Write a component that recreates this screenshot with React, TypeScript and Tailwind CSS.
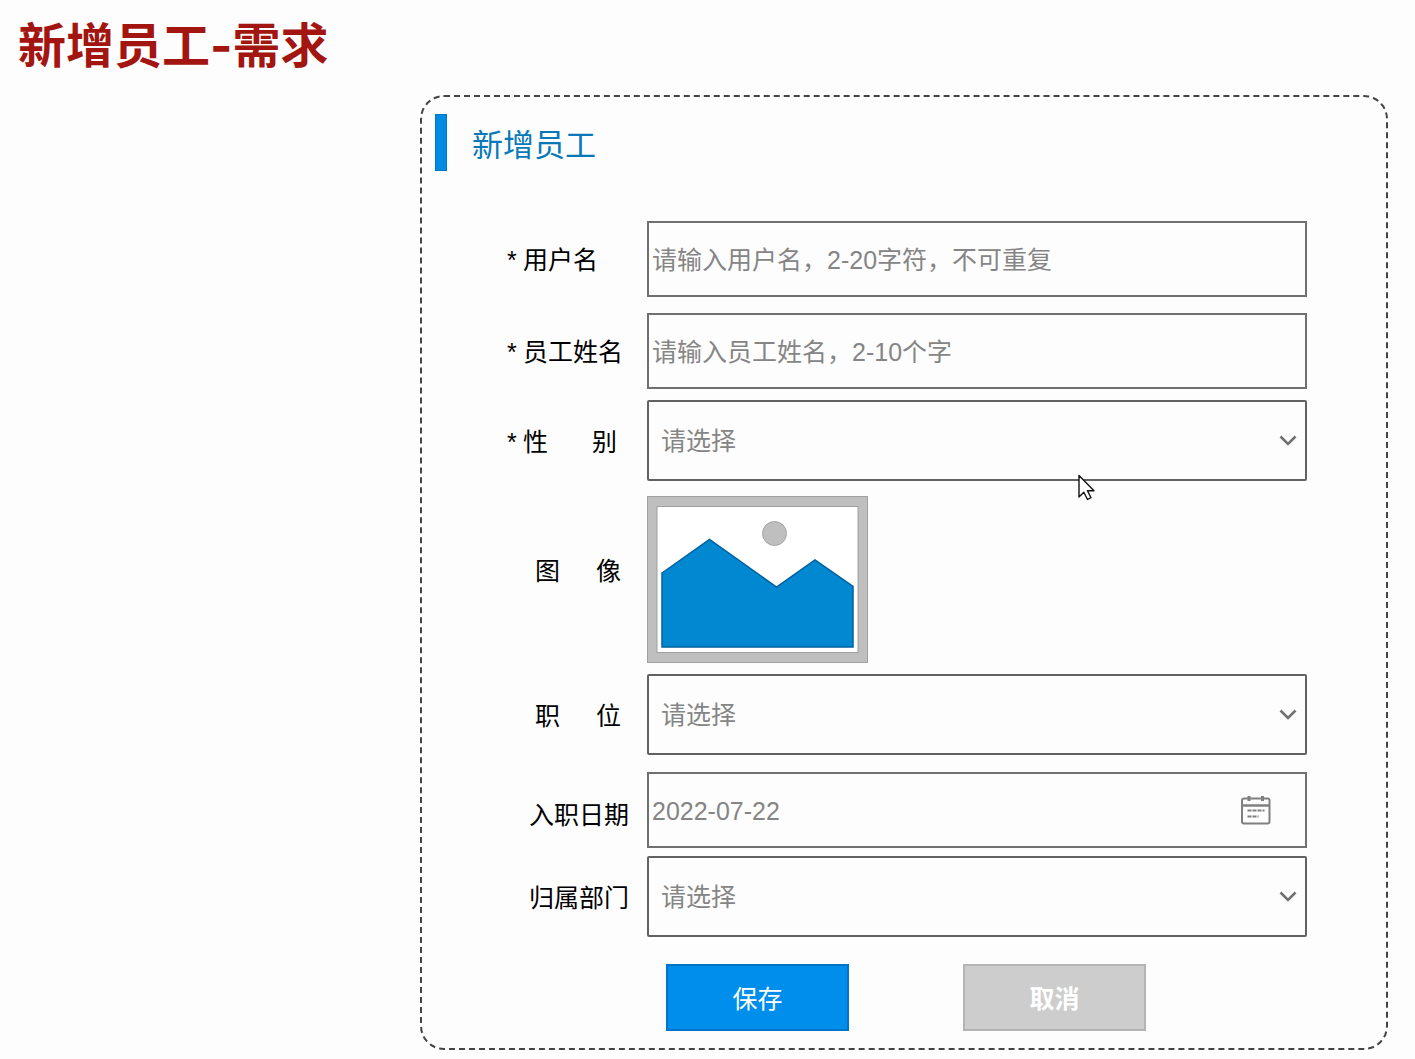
import { useState } from "react";

type Field = {
  id: string;
  label: string[];
  required?: boolean;
  rowClass?: string;
  labelClass: string;
};

const fields: Record<string, Field> = {
  username: { id: "username", label: ["用户名"], required: true, labelClass: "gap-2" },
  name: { id: "name", label: ["员工姓名"], required: true, labelClass: "gap-2", rowClass: "mt-4" },
  gender: { id: "gender", label: ["性", "别"], required: true, labelClass: "gap-11", rowClass: "mt-[11px]" },
  image: { id: "image", label: ["图", "像"], labelClass: "pl-7 pb-5 gap-9", rowClass: "mt-[15px]" },
  job: { id: "job", label: ["职", "位"], labelClass: "pl-7 gap-9", rowClass: "mt-[11px]" },
  entry: { id: "entry", label: ["入职日期"], labelClass: "pl-[22px] pt-2", rowClass: "mt-[17px]" },
  dept: { id: "dept", label: ["归属部门"], labelClass: "pl-[22px]", rowClass: "mt-2" },
};

function Row({ field, children }: { field: Field; children: React.ReactNode }) {
  return (
    <div className={`flex items-center ${field.rowClass || ""}`}>
      <label htmlFor={field.id} className="w-[140px] shrink-0 flex pt-0.5 text-[25px] leading-8 text-black">
        {field.required && <span className="w-4 shrink-0">*</span>}
        <span className={`flex ${field.labelClass}`}>
          {field.label.map(part => <span key={part}>{part}</span>)}
        </span>
      </label>
      <div className="relative flex-1 min-w-0">{children}</div>
    </div>
  );
}

function SelectBox({ id, options }: { id: string; options: string[] }) {
  return (
    <>
      <select id={id} defaultValue=""
        className="block w-full h-[81px] appearance-none rounded-xs border-2 border-[#626262] bg-transparent pl-3 pr-10 pt-[3px] text-[25px] text-[#858585] outline-none">
        <option value="">请选择</option>
        {options.map(o => <option key={o} value={o}>{o}</option>)}
      </select>
      <svg className="absolute right-[10px] top-[35px] pointer-events-none" width="18" height="12" viewBox="0 0 18 12" fill="none">
        <path d="M1.5 1.5 9 9l7.5-7.5" stroke="#707070" strokeWidth="2.5"/>
      </svg>
    </>
  );
}

function Pointer() {
  return (
    <svg className="absolute right-[212px] top-[74px] pointer-events-none" width="17" height="27" viewBox="0 0 17 27">
      <path d="M1 1.5v21.5l4.8-4.8 3.7 7.3 3.5-1.8-3.5-7H16z" fill="#fff" stroke="#111" strokeWidth="1.4" strokeLinejoin="round"/>
    </svg>
  );
}

export default function App() {
  const [username, setUsername] = useState("");
  const [name, setName] = useState("");
  const [date, setDate] = useState("2022-07-22");

  const inputClass = "block w-full h-[76px] border-2 border-[#707070] bg-transparent pl-[3px] pr-3 pt-0.5 text-[25px] text-[#858585] placeholder:text-[#858585] outline-none";

  return (
    <main className="min-h-screen bg-[#fdfdfd] pb-[9px] font-['Liberation_Sans','Noto_Sans_CJK_SC',sans-serif]">
      <h1 className="h-[95px] pl-[18px] pt-4 font-['Inter','Noto_Sans_CJK_SC',sans-serif] text-[48px] leading-[60px] font-bold text-[#a31510]">新增员工-需求</h1>

      <form onSubmit={e => e.preventDefault()}
        className="ml-[420px] mr-[27px] rounded-[24px] border-2 border-dashed border-[#444] pt-[17px] pb-[17px]">
        <div className="flex items-center ml-[13px]">
          <div className="w-3 h-[57px] bg-[#008be2] border border-[#0076c4]"/>
          <h2 className="ml-[25px] pt-1.5 text-[31px] leading-10 text-[#0878b9]">新增员工</h2>
        </div>

        <div className="mt-[50px] ml-[85px] mr-[79px]">
          <Row field={fields.username}>
            <input id="username" value={username} onChange={e => setUsername(e.target.value)}
              placeholder="请输入用户名，2-20字符，不可重复" className={inputClass}/>
          </Row>
          <Row field={fields.name}>
            <input id="name" value={name} onChange={e => setName(e.target.value)}
              placeholder="请输入员工姓名，2-10个字" className={inputClass}/>
          </Row>
          <Row field={fields.gender}>
            <SelectBox id="gender" options={["男", "女"]}/>
            <Pointer/>
          </Row>
          <Row field={fields.image}>
            <button id="image" type="button" className="block">
              <svg width="221" height="167" viewBox="0 0 221 167">
                <rect x="0.5" y="0.5" width="220" height="166" fill="#bfbfbf" stroke="#a0a0a0"/>
                <rect x="10" y="10.5" width="201" height="146" fill="#fff" stroke="#a0a0a0"/>
                <circle cx="127.5" cy="37.5" r="12" fill="#bfbfbf" stroke="#a5a5a5"/>
                <path d="M15 77 62.5 43.5 129.5 91 168 64l38 26.5V151H15z" fill="#0288d1" stroke="#01609f" strokeWidth="1.5"/>
              </svg>
            </button>
          </Row>
          <Row field={fields.job}>
            <SelectBox id="job" options={["班主任", "讲师"]}/>
          </Row>
          <Row field={fields.entry}>
            <input id="entry" value={date} onChange={e => setDate(e.target.value)} className={inputClass}/>
            <button type="button" aria-label="选择日期" className="absolute right-9 top-6">
              <svg width="30" height="29" viewBox="0 0 30 29" fill="none" stroke="#808080" strokeWidth="2">
                <rect x="1" y="2.5" width="27.5" height="25" rx="2"/>
                <path d="M1 9.5h27.5" strokeWidth="2.5"/>
                <path d="M8 0v5M21.5 0v5" strokeWidth="3"/>
                <path d="M6.5 14.5h17M6.5 20.5h11" strokeDasharray="4 1"/>
              </svg>
            </button>
          </Row>
          <Row field={fields.dept}>
            <SelectBox id="dept" options={["教研部", "学工部"]}/>
          </Row>
          <div className="mt-[27px] ml-[159px] flex gap-[114px] text-[25px] text-white">
            <button type="submit" className="w-[183px] h-[67px] border-2 border-[#0074c8] bg-[#008eec] pt-1">保存</button>
            <button type="button" className="w-[183px] h-[67px] border-2 border-[#b4b4b4] bg-[#cdcdcd] pt-1 font-bold">取消</button>
          </div>
        </div>
      </form>
    </main>
  );
}
